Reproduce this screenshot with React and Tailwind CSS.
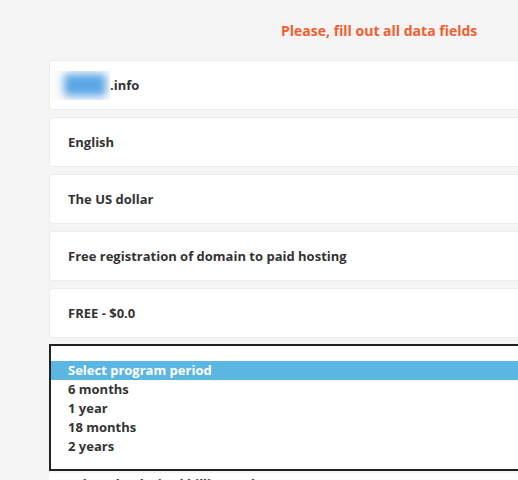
export default function App() {
  const font = { fontFamily: '"Open Sans", "Liberation Sans", sans-serif' };
  const cards = ["English", "The US dollar", "Free registration of domain to paid hosting", "FREE - $0.0"];
  const opts = ["6 months", "1 year", "18 months", "2 years"];
  return (
    <div className="w-[518px] h-[480px] overflow-hidden bg-[#f5f5f5] relative" style={font}>
      <div className="flex flex-col pl-[49px] w-[700px]">
        <div className="h-[60px] pl-[232px] pt-[21px] text-[14px] font-bold leading-[19px] text-[#f45d2c]">
          Please, fill out all data fields
        </div>
        <div className="flex flex-col gap-[7px]">
          <div className="h-[50px] bg-white border border-[#ececec] rounded-[3px] flex items-center pt-[1px] text-[13px] font-bold text-[#333]">
            <div className="ml-[1px] w-[59px] h-[29px] overflow-hidden relative bg-[#fbfbfb]">
              <div className="absolute left-[13px] top-[3px] w-[42px] h-[22px] bg-[#5aa6e6] blur-[4px] rounded-[3px]"></div>
            </div>
            <span>.info</span>
          </div>
          {cards.map((c) => (
            <div key={c} className="h-[50px] bg-white border border-[#ececec] rounded-[3px] flex items-center pt-[1px] pl-[18px] text-[13px] font-bold text-[#333]">
              {c}
            </div>
          ))}
          <div className="-mt-px bg-white border-2 border-[#222] pt-[15px] pb-[13px] flex flex-col text-[13px] font-bold leading-[19px] text-[#333]">
            <div className="bg-[#5bb6e2] text-white pl-[17px] h-[19px]">Select program period</div>
            {opts.map((o) => (
              <div key={o} className="pl-[17px] h-[19px]">{o}</div>
            ))}
          </div>
        </div>
        <div className="mt-[2px] bg-white h-[40px] pl-[19px] pt-[2px] text-[13px] font-bold text-[#333]">
          Select the desired billing cycle
        </div>
      </div>
    </div>
  );
}
